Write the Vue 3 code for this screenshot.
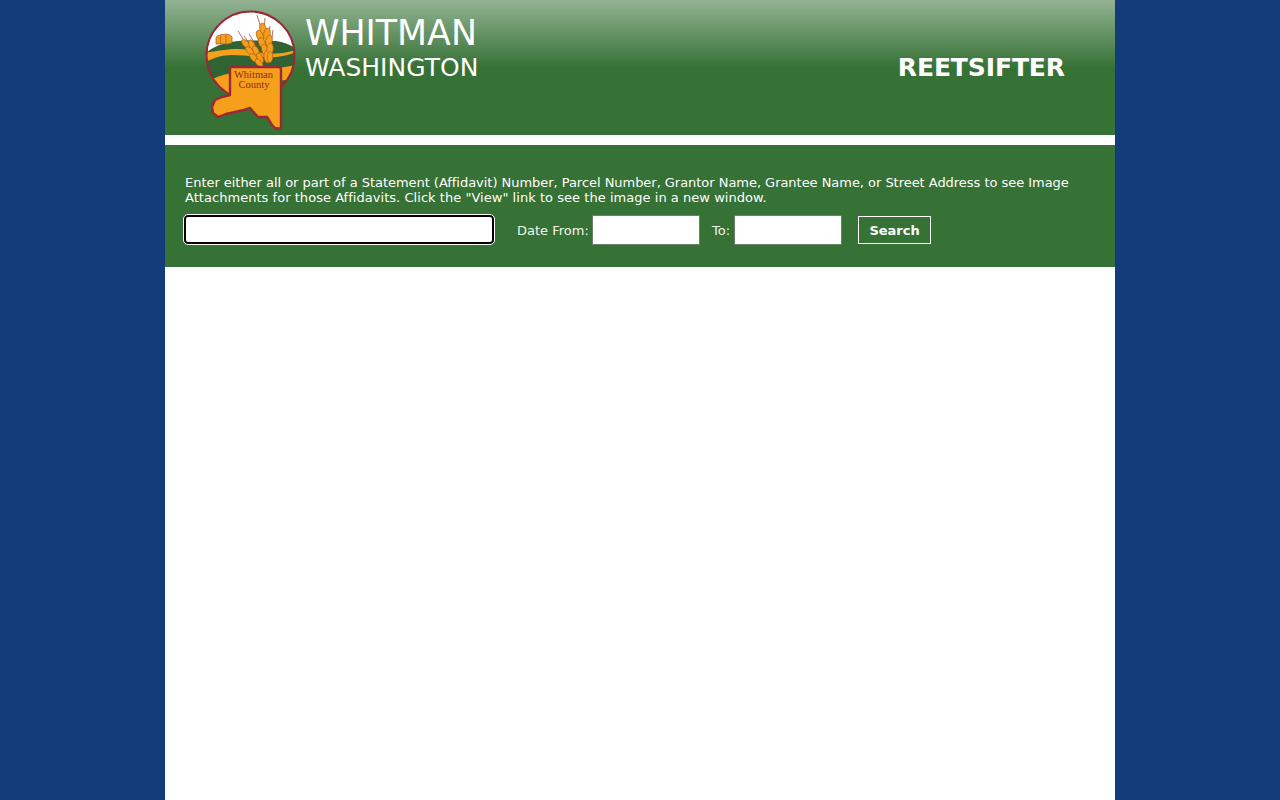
<template>
  <div class="page">
    <div class="wrap">
      <header class="head">
        <svg class="logo" viewBox="205 10 92 122" width="92" height="122">
          <defs>
            <clipPath id="disc"><circle cx="250.5" cy="55.5" r="44" /></clipPath>
          </defs>
          <circle cx="250.5" cy="55.5" r="44" fill="#fff" />
          <g clip-path="url(#disc)">
            <path d="M205 54 C212 47 222 43 238 41 C252 40 268 41 276 41 C284 42 291 45 297 49 V75 H205Z" fill="#2f6334" />
            <path d="M205 53 C215 51 228 49 238 49 C248 49 255 51 262 53 C272 55 285 53 297 50 V80 H205Z" fill="#f59f1a" />
            <path d="M205 62 C214 58 222 55 232 55 C245 55 262 58 276 57 C285 56 291 54 297 52 V100 H205Z" fill="#2f6334" />
            <path d="M205 82 C214 78 222 75 232 73 V100 H205Z" fill="#f59f1a" />
            <path d="M279 68 L297 65 V78 L279 81Z" fill="#f59f1a" />
          </g>
          <path d="M216 44 V38 Q217 35 219.500 35.500 Q221 33.500 224 34.500 Q226 33.500 228 34.500 Q231 34.500 232 37 V43 L228 44Z" fill="#f59f1a" stroke="#a5562a" stroke-width=".7" />
          <path d="M220.500 36 V44 M226 35 V44" stroke="#a5562a" stroke-width=".6" fill="none" />
          <g fill="none" stroke="#9c4a3a" stroke-width=".8">
            <path d="M257 15 L263 34 M265 18 L264 32 M270 26 L268 38 M273 30 L271 44 M238 31 L250 50 M244 36 L254 50 M249 34 L258 48" />
          </g>
          <g fill="#f59f1a" stroke="#b5601c" stroke-width=".7">
            <ellipse cx="263" cy="29" rx="3.200" ry="6" transform="rotate(-12 263 29)" />
            <ellipse cx="260" cy="36" rx="3.200" ry="6" transform="rotate(-22 260 36)" />
            <ellipse cx="267" cy="34" rx="3.200" ry="6" transform="rotate(12 267 34)" />
            <ellipse cx="262" cy="43" rx="3.200" ry="6" transform="rotate(-22 262 43)" />
            <ellipse cx="269" cy="41" rx="3.200" ry="6" transform="rotate(10 269 41)" />
            <ellipse cx="265" cy="50" rx="3.200" ry="6" transform="rotate(-18 265 50)" />
            <ellipse cx="270" cy="49" rx="3.200" ry="6" transform="rotate(6 270 49)" />
            <ellipse cx="267" cy="57" rx="3" ry="6" transform="rotate(-8 267 57)" />
            <ellipse cx="270" cy="57" rx="2.800" ry="5.500" transform="rotate(4 270 57)" />
            <ellipse cx="246" cy="44" rx="2.800" ry="5.500" transform="rotate(-45 246 44)" />
            <ellipse cx="252" cy="45" rx="2.800" ry="5.500" transform="rotate(-25 252 45)" />
            <ellipse cx="250" cy="51" rx="2.800" ry="5.500" transform="rotate(-45 250 51)" />
            <ellipse cx="256" cy="51" rx="2.800" ry="5.500" transform="rotate(-25 256 51)" />
            <ellipse cx="254" cy="58" rx="2.800" ry="5.500" transform="rotate(-45 254 58)" />
            <ellipse cx="260" cy="58" rx="2.800" ry="5.500" transform="rotate(-25 260 58)" />
            <ellipse cx="259" cy="63" rx="2.600" ry="5" transform="rotate(-40 259 63)" />
          </g>
          <circle cx="250.5" cy="55.5" r="44" fill="none" stroke="#9c2737" stroke-width="2" />
          <path
            d="M230 67 H279 C280.500 67 281 68 281 70 V127 C281 128.500 279 129 275 128 L272 125 L267 117 L258 117 L250 108 L244 110 L235 112 L226 114 L218 117 L213 113 L212 107 L215 100 L222 97 L230 95 Z"
            fill="#f59f1a" stroke="#9c2737" stroke-width="2.400" stroke-linejoin="round"
          />
          <text x="253.5" y="77.500" class="logo-text">Whitman</text>
          <text x="254" y="88" class="logo-text">County</text>
        </svg>
        <div class="titles">
          <div class="county">WHITMAN</div>
          <div class="state">WASHINGTON</div>
        </div>
        <div class="app-name">REETSIFTER</div>
      </header>

      <section class="panel">
        <p class="help">
          <span class="line-one">Enter either all or part of a Statement (Affidavit) Number, Parcel Number, Grantor Name, Grantee Name, or Street Address to see Image</span>
          <span class="line-two">Attachments for those Affidavits. Click the "View" link to see the image in a new window.</span>
        </p>
        <div class="search-row">
          <input class="search-box" type="text" v-model="query">
          <label class="lbl from" for="date-from">Date From:</label>
          <input id="date-from" class="date-box" type="text" v-model="dateFrom">
          <label class="lbl to" for="date-to">To:</label>
          <input id="date-to" class="date-box" type="text" v-model="dateTo">
          <button class="search-btn" type="button">Search</button>
        </div>
      </section>
    </div>
  </div>
</template>

<script setup>
import { ref } from 'vue';

const query = ref('');
const dateFrom = ref('');
const dateTo = ref('');
</script>

<style>
html, body {
  margin: 0;
  background: #133c7a;
}
</style>

<style scoped>
.page {
  min-height: 800px;
  background: #133c7a;
  font-family: "DejaVu Sans", sans-serif;
}
.wrap {
  width: 950px;
  height: 800px;
  margin: 0 auto;
  background: #fff;
}
.head {
  box-sizing: border-box;
  height: 135px;
  display: flex;
  align-items: flex-start;
  padding: 10px 50px 0 40px;
  color: #fff;
  background: linear-gradient(#93b393 0, #367135 68px);
}
.logo {
  flex: none;
}
.logo-text {
  font-family: "Liberation Serif", serif;
  font-size: 10.5px;
  fill: #8e2a2a;
  text-anchor: middle;
}
.titles {
  margin-left: 8px;
  padding-top: 3px;
}
.county {
  font-size: 34.8px;
  line-height: 40px;
}
.state {
  font-size: 25px;
  line-height: 29px;
}
.app-name {
  margin-left: auto;
  padding-top: 42px;
  font-size: 25px;
  line-height: 32px;
  font-weight: bold;
  letter-spacing: -.1px;
}
.panel {
  box-sizing: border-box;
  height: 122px;
  margin-top: 10px;
  padding: 30px 20px 0;
  background: #367135;
  color: #fff;
  font-size: 13px;
}
.help {
  margin: 0;
  line-height: 15px;
}
.line-one,
.line-two {
  display: block;
  white-space: nowrap;
}
.line-one {
  letter-spacing: -.036px;
}
.line-two {
  letter-spacing: .038px;
}
.search-row {
  display: flex;
  align-items: center;
  margin-top: 10px;
  height: 30px;
}
.search-box {
  box-sizing: border-box;
  width: 310px;
  height: 29px;
  margin: 0 0 1px -1px;
  border: 2px solid #000;
  border-radius: 4px;
  outline: 1px solid #fff;
  background: #fff;
}
.lbl {
  color: #f0f7ee;
}
.from {
  margin-left: 23px;
  margin-right: 3.2px;
}
.to {
  margin-left: 12px;
  margin-right: 4px;
}
.date-box {
  box-sizing: border-box;
  width: 108px;
  height: 30px;
  padding: 1px 2px;
  border: 1px solid #6b7f6b;
  background: #fff;
}
.search-btn {
  box-sizing: border-box;
  width: 73px;
  height: 28px;
  margin-left: 16px;
  padding: 0;
  border: 1px solid #fff;
  background: transparent;
  color: #fff;
  font-family: inherit;
  font-size: 13px;
  font-weight: bold;
}
</style>
